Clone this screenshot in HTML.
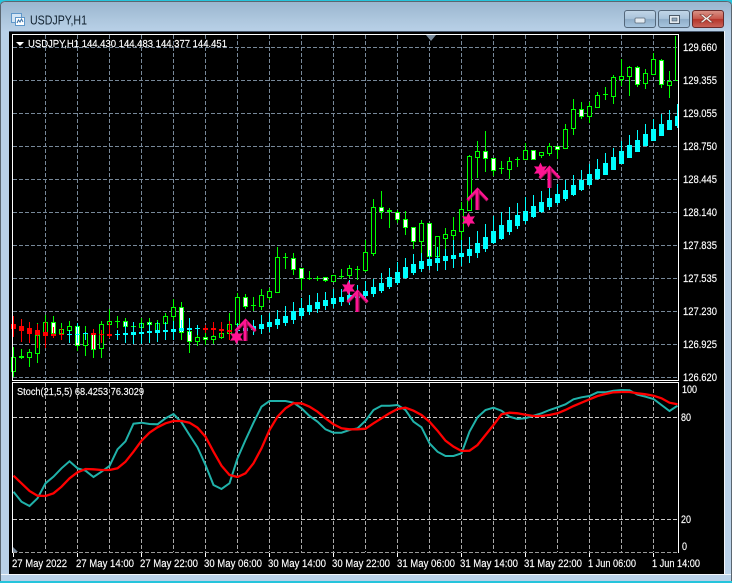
<!DOCTYPE html>
<html><head><meta charset="utf-8"><style>
html,body{margin:0;padding:0;width:732px;height:583px;overflow:hidden;background:#25c4dc}
svg{position:absolute;left:0;top:0;display:block}
text{font-family:"Liberation Sans",sans-serif;fill:#fff;font-size:11px;stroke:#fff;stroke-width:.15px}
</style></head><body>
<svg xmlns="http://www.w3.org/2000/svg" width="732" height="583" viewBox="0 0 732 583">
<defs>
<linearGradient id="tb" x1="0" y1="0" x2="0" y2="1"><stop offset="0" stop-color="#9ab6cf"/><stop offset=".6" stop-color="#aec7de"/><stop offset="1" stop-color="#b9d1e8"/></linearGradient>
<linearGradient id="bt" x1="0" y1="0" x2="0" y2="1"><stop offset="0" stop-color="#c2d6e8"/><stop offset=".48" stop-color="#a9c3da"/><stop offset=".52" stop-color="#8fadc8"/><stop offset="1" stop-color="#a9c6e0"/></linearGradient>
<linearGradient id="cl" x1="0" y1="0" x2="0" y2="1"><stop offset="0" stop-color="#d9958a"/><stop offset=".48" stop-color="#c8584c"/><stop offset=".52" stop-color="#b5352a"/><stop offset="1" stop-color="#c9665c"/></linearGradient>
</defs>
<rect x="0" y="0" width="732" height="583" fill="#25c4dc"/>
<path d="M0 581V6Q0 1 6 1H726Q732 1 732 6V581Z" fill="#b9d1e8"/>
<path d="M.5 581V6Q.5 1.500 6 1.500H726Q731.500 1.500 731.500 6V581" fill="none" stroke="#5a6670"/>
<path d="M1 32V6Q1 2 6 2H726Q731 2 731 6V32Z" fill="url(#tb)"/>
<rect x="1" y="574" width="730" height="1" fill="#f0f6fb"/>
<rect x="9" y="31" width="716" height="544" fill="#f2f6fa"/>
<rect x="9" y="32" width="715" height="542" fill="#000"/>
<rect x="9" y="31" width="715" height="1" fill="#46566a"/>
<!-- title icon -->
<rect x="11.500" y="13.500" width="10" height="9" fill="#d5e6f5" stroke="#5f97c9"/>
<rect x="15.500" y="17.500" width="9" height="8" fill="#fff" stroke="#5f97c9"/>
<path d="M17 23l1.500-3 1.500 2 1.500-3 1.500 3" fill="none" stroke="#3a72a8"/>
<text x="30" y="24.500" textLength="57" lengthAdjust="spacingAndGlyphs" style="font-size:12.500px;fill:#10202e;stroke:none">USDJPY,H1</text>
<!-- buttons -->
<rect x="624.500" y="10.500" width="31" height="17" rx="2.500" fill="url(#bt)" stroke="#54677a"/>
<rect x="635" y="18" width="10" height="5" rx="1" fill="#e4ebf1" stroke="#5a6a7a" stroke-width=".8"/>
<rect x="658.500" y="10.500" width="31" height="17" rx="2.500" fill="url(#bt)" stroke="#54677a"/>
<rect x="669.500" y="15.500" width="10" height="8" fill="#e4ebf1" stroke="#4c5a68"/><rect x="672" y="18" width="5" height="3" fill="#8fa6bb" stroke="#4c5a68" stroke-width=".6"/>
<rect x="692.500" y="10.500" width="31" height="17" rx="2.500" fill="url(#cl)" stroke="#6a2a2a"/>
<path d="M703 14.500l3.500 3 3.500-3h3l-4.500 4 4.500 4h-3l-3.500-3-3.500 3h-3l4.500-4-4.500-4z" fill="#f0ece8" stroke="#7d3a34" stroke-width=".6"/>
<g id="chart" shape-rendering="crispEdges"></g>
<g id="stoch"></g>
<g id="marks"></g>
<!-- frame -->
<g shape-rendering="crispEdges" fill="#fff">
<rect x="12" y="34" width="667" height="1"/>
<rect x="12" y="34" width="1" height="347"/>
<rect x="678" y="34" width="1" height="347"/>
<rect x="12" y="380" width="667" height="1"/>
<rect x="12" y="382" width="667" height="1"/>
<rect x="12" y="382" width="1" height="171"/>
<rect x="678" y="382" width="1" height="171"/>
</g>
<path d="M426 35h10l-5 6z" fill="#778899"/>
<path d="M13 552v-5l5 5z" fill="#778899"/>
<path d="M16 42h8l-4 4z" fill="#fff"/>
<text x="28" y="47" textLength="199" lengthAdjust="spacingAndGlyphs" style="font-size:10.500px">USDJPY,H1  144.430 144.483 144.377 144.451</text>
<text x="17" y="395" textLength="127" lengthAdjust="spacingAndGlyphs" style="font-size:10.500px">Stoch(21,5,5) 68.4253 76.3029</text>
<g id="labels">
<text x="683" y="51" textLength="34" lengthAdjust="spacingAndGlyphs">129.660</text>
<text x="683" y="84" textLength="34" lengthAdjust="spacingAndGlyphs">129.355</text>
<text x="683" y="117" textLength="34" lengthAdjust="spacingAndGlyphs">129.055</text>
<text x="683" y="150" textLength="34" lengthAdjust="spacingAndGlyphs">128.750</text>
<text x="683" y="183" textLength="34" lengthAdjust="spacingAndGlyphs">128.445</text>
<text x="683" y="216" textLength="34" lengthAdjust="spacingAndGlyphs">128.140</text>
<text x="683" y="249" textLength="34" lengthAdjust="spacingAndGlyphs">127.835</text>
<text x="683" y="282" textLength="34" lengthAdjust="spacingAndGlyphs">127.535</text>
<text x="683" y="315" textLength="34" lengthAdjust="spacingAndGlyphs">127.230</text>
<text x="683" y="348" textLength="34" lengthAdjust="spacingAndGlyphs">126.925</text>
<text x="683" y="381" textLength="34" lengthAdjust="spacingAndGlyphs">126.620</text>
<text x="682" y="393" textLength="15" lengthAdjust="spacingAndGlyphs">100</text>
<text x="681" y="421" textLength="10" lengthAdjust="spacingAndGlyphs">80</text>
<text x="681" y="523" textLength="10" lengthAdjust="spacingAndGlyphs">20</text>
<text x="682" y="550" textLength="5" lengthAdjust="spacingAndGlyphs">0</text>
<text x="12" y="567" textLength="55" lengthAdjust="spacingAndGlyphs">27 May 2022</text>
<text x="76" y="567" textLength="58" lengthAdjust="spacingAndGlyphs">27 May 14:00</text>
<text x="140" y="567" textLength="58" lengthAdjust="spacingAndGlyphs">27 May 22:00</text>
<text x="204" y="567" textLength="58" lengthAdjust="spacingAndGlyphs">30 May 06:00</text>
<text x="268" y="567" textLength="58" lengthAdjust="spacingAndGlyphs">30 May 14:00</text>
<text x="332" y="567" textLength="58" lengthAdjust="spacingAndGlyphs">30 May 22:00</text>
<text x="397" y="567" textLength="58" lengthAdjust="spacingAndGlyphs">31 May 06:00</text>
<text x="460" y="567" textLength="58" lengthAdjust="spacingAndGlyphs">31 May 14:00</text>
<text x="524" y="567" textLength="58" lengthAdjust="spacingAndGlyphs">31 May 22:00</text>
<text x="588" y="567" textLength="48" lengthAdjust="spacingAndGlyphs">1 Jun 06:00</text>
<text x="652" y="567" textLength="48" lengthAdjust="spacingAndGlyphs">1 Jun 14:00</text>
</g>
</svg>
<script>
(function(){
var out='';
function R(x,y,w,h,c){if(h<1)h=1;out+='<rect x="'+x+'" y="'+y+'" width="'+w+'" height="'+h+'" fill="'+c+'"/>';}
function L(x,y1,x2,y2,c,d){out+='<line x1="'+x+'" y1="'+y1+'" x2="'+x2+'" y2="'+y2+'" stroke="'+c+'" stroke-dasharray="'+d+'"/>';}
var G='#778899',i;
var hy=[47,80,113,146,179,212,245,278,311,344,377];
for(i=0;i<hy.length;i++)L(13,hy[i]+.5,678,hy[i]+.5,G,'4 2');
for(i=0;i<20;i++){var gx=45+32*i+.5;L(gx,35,gx,380,G,'4 2');}
for(i=0;i<20;i++){var gx2=45+32*i+.5;L(gx2,383,gx2,552,'#a8a8a8','4 2');}
L(13,417.5,678,417.5,'#c8c8c8','4 2');
L(13,519.5,678,519.5,'#c8c8c8','4 2');
L(13,552.5,678,552.5,'#999','4 2');
for(i=0;i<11;i++)R(13+64*i,553,1,4,'#fff');
function Z(y0,a){return a.map(function(v){return [v[0],y0+v[1]/3,y0+v[2]/3,y0+v[3]/3,y0+v[4]/3,v[5]];});}
var gr=Z(280,[
[13,200,290,230,272,'h'],[21,207,237,229,233,'c'],[29,207,260,217,230,'h'],[37,130,250,165,218,'h'],[45,105,205,127,165,'h'],[53,108,170,127,158,'w'],[61,130,175,148,160,'h'],[69,123,165,138,150,'h'],[77,130,212,138,196,'w'],[85,138,228,160,196,'h'],[93,148,234,160,208,'w'],[101,123,234,133,205,'h'],[109,88,160,124,133,'h'],[117,108,145,124,126,'c'],[125,115,150,124,138,'w'],[133,127,160,138,140,'c'],[141,115,170,129,140,'h'],[149,115,145,127,133,'w'],[157,120,155,130,152,'h'],[165,100,140,109,130,'h'],[173,58,125,82,109,'h'],[181,67,180,82,155,'w'],[189,130,218,154,184,'w'],[197,155,197,172,182,'h'],[205,145,195,172,178,'w'],[213,130,192,169,178,'h'],[221,125,178,160,170,'h']]);
gr=gr.concat(Z(180,[
[229,400,480,433,460,'h'],[237,340,440,352,433,'h'],[245,343,388,352,377,'w'],[253,351,393,376,378,'c'],[261,328,390,346,377,'h'],[269,323,360,334,350,'h'],[277,202,335,232,335,'h'],[285,220,267,232,235,'c'],[293,220,285,235,266,'w'],[301,265,330,265,295,'w'],[309,273,300,294,296,'c'],[317,288,303,294,296,'c'],[325,290,305,292,299,'w'],[333,285,303,286,302,'h'],[341,267,298,288,290,'c'],[349,255,295,265,285,'h'],[357,258,300,267,269,'c'],[365,180,275,217,270,'h'],[373,57,228,82,218,'h'],[381,33,118,82,92,'w'],[389,84,143,90,96,'c'],[397,90,130,95,116,'w'],[405,94,165,118,142,'w'],[413,140,207,142,182,'w'],[421,120,230,130,182,'h'],[429,130,240,130,228,'w'],[437,168,235,168,228,'h'],[445,145,220,163,173,'h']]));
gr=gr.concat(Z(40,[
[453,530,620,570,584,'h'],[461,487,600,508,572,'h'],[469,345,510,349,510,'h'],[477,303,415,334,350,'h'],[485,273,395,334,355,'w'],[493,355,408,355,389,'w'],[501,363,402,384,388,'c'],[509,350,418,363,387,'h'],[517,352,380,357,361,'c'],[525,310,360,331,356,'h'],[533,330,358,331,356,'w'],[541,336,353,337,345,'h'],[549,310,347,319,338,'h'],[557,318,357,319,326,'w'],[565,252,326,267,323,'h'],[573,178,285,208,265,'h'],[581,186,236,208,227,'w'],[589,185,248,199,227,'h'],[597,155,205,166,200,'h'],[605,141,180,162,166,'c'],[613,105,192,112,167,'h'],[621,57,137,109,116,'h'],[629,78,167,82,107,'h'],[637,78,140,82,131,'w'],[645,87,147,100,128,'h'],[653,40,105,58,101,'h'],[661,58,143,61,133,'w'],[669,94,173,124,134,'h']]));
var g='#00ff00';
gr.forEach(function(c){var x=c[0],t=Math.round(c[1]),b=Math.round(c[2]),bt=Math.round(c[3]),bb=Math.round(c[4]);
R(x,t,1,b-t,g);
if(c[5]=='c'){R(x-2,bt,5,Math.max(1,bb-bt),g);}
else{var f=c[5]=='w'?'#fff':'#000';R(x-2,bt,5,bb-bt+1,g);R(x-1,bt+1,3,Math.max(bb-bt-1,0),f);}
});
R(675,36,1,45,g);R(675,80,3,1,g);
var C='#00ffff',Rd='#ff0000';
function H(y0,a){a.forEach(function(v){var t=Math.round(y0+v[1]/3),b=Math.round(y0+v[2]/3),bt=Math.round(y0+v[3]/3),bb=Math.round(y0+v[4]/3),col=v[5]?Rd:C;R(v[0],t,1,b-t,col);R(v[0]-2,bt,5,Math.max(bb-bt,1),col);});}
H(280,[[13,108,170,133,147,1],[21,117,185,138,152,1],[29,126,190,145,161,1],[37,133,205,150,165,1],[45,127,205,157,167,1],[53,140,175,161,167,1],[61,145,180,161,165,1],[69,150,190,161,163,0],[77,128,190,163,165,0],[85,155,180,160,163,0],[93,148,208,160,164,1],[101,150,190,161,166,1],[109,125,175,161,167,1],[117,150,180,162,165,0],[125,125,190,159,165,0],[133,127,192,156,164,0],[141,128,192,156,162,0],[149,125,188,153,159,0],[157,125,185,151,159,0],[165,125,180,150,156,0],[173,122,180,147,157,0],[181,120,155,144,154,0],[189,113,165,144,150,0],[197,135,165,143,147,0],[205,135,160,144,150,1],[213,125,165,144,150,1],[221,125,170,147,153,1]]);
H(180,[[229,423,480,449,455,1],[237,430,465,449,452,0],[245,418,462,443,452,0],[253,420,465,438,450,0],[261,405,462,432,447,0],[269,398,456,426,441,0],[277,390,447,417,435,0],[285,378,438,408,429,0],[293,366,433,393,420,0],[301,354,418,384,408,0],[309,345,405,375,396,0],[317,339,399,366,387,0],[325,336,390,360,378,0],[333,327,384,354,372,0],[341,327,377,351,366,0],[349,300,375,345,360,0],[357,315,368,340,355,0],[365,303,366,333,348,0],[373,297,351,321,342,0],[381,279,339,309,333,0],[389,265,327,291,321,0],[397,246,315,276,309,0],[405,234,297,261,294,0],[413,222,285,252,279,0],[421,220,276,243,267,0],[429,210,270,237,258,0],[437,202,273,234,249,0],[445,207,270,228,243,0]]);
H(40,[[453,600,684,645,657,0],[461,600,678,639,651,0],[469,590,670,627,648,0],[477,572,654,609,639,0],[485,552,636,591,627,0],[493,528,612,573,609,0],[501,516,600,555,597,0],[509,501,585,540,576,0],[517,489,567,525,558,0],[525,471,552,513,543,0],[533,465,534,498,531,0],[541,453,519,486,516,0],[549,443,510,474,501,0],[557,432,495,462,489,0],[565,420,483,450,477,0],[573,405,468,435,465,0],[581,390,453,420,450,0],[589,372,438,402,435,0],[597,357,420,387,417,0],[605,339,405,369,405,0],[613,324,390,351,390,0],[621,303,372,333,372,0],[629,285,354,315,354,0],[637,270,336,300,336,0],[645,252,318,282,318,0],[653,237,303,267,303,0],[661,222,288,252,288,0],[669,210,270,240,270,0]]);
R(677,104,1,24,C);R(675,116,3,10,C);
document.getElementById('chart').innerHTML=out;
var t6=[335,365,378,355,310,290,265,244,265,272,291,275,258,208,184,131,128,132,133,115,102,127,165,202,255,315,327,310,235,180,128,80,63,63,63,68,85,108,125,148,158,158,150,145];
var r6=[287,310,333,347,348,340,320,295,277,267,268,270,270,265,245,215,182,158,142,130,123,123,128,143,170,215,257,285,291,280,250,205,150,110,85,70,70,80,95,115,133,145,148,148];
var t7=[122,90,77,77,75,90,125,142,190,215,228,228,220,155,112,90,83,92,110,117,115,107,100,90,82,73,58,52,48,37,37,32,30,31,44,50,57,75,93,77];
var r7=[146,130,115,100,87,83,92,105,125,152,182,200,213,212,195,165,135,103,98,100,104,108,108,105,100,90,78,68,58,48,42,37,36,36,40,43,47,55,68,73];
function pts(a,b){var s=[];a.concat(b).forEach(function(v,k){s.push((13.5+8*k)+','+(380+v/3).toFixed(1));});return s.join(' ');}
document.getElementById('stoch').innerHTML=
'<polyline points="'+pts(t6,t7)+'" fill="none" stroke="#20b2aa" stroke-width="2"/>'+
'<polyline points="'+pts(r6,r7)+'" fill="none" stroke="#ff0000" stroke-width="2.300"/>';
var m='';
[[245,319],[357,290],[477,188],[549,166]].forEach(function(a){var x=a[0]+.5,y=a[1];
m+='<path d="M'+(x-10)+' '+(y+12.5)+'L'+x+' '+(y+2)+'L'+(x+10)+' '+(y+12.5)+'" fill="none" stroke="#b3105f" stroke-width="3"/>';
m+='<path d="M'+(x-10)+' '+(y+11.5)+'L'+x+' '+(y+1)+'L'+(x+10)+' '+(y+11.5)+'" fill="none" stroke="#ff1493" stroke-width="2.200"/>';
m+='<rect x="'+(x-2)+'" y="'+(y+2)+'" width="4" height="20" fill="#b3105f"/><rect x="'+(x-2)+'" y="'+(y+2)+'" width="2.500" height="20" fill="#ff1493"/>';
});
[[236,337],[348,288],[468,220],[540,170]].forEach(function(a){var x=a[0]+.5,y=a[1],s='',k;
for(k=0;k<12;k++){var rr=k%2?3.900:7.500,an=k*Math.PI/6-Math.PI/2;s+=(x+rr*Math.cos(an)).toFixed(1)+','+(y+rr*Math.sin(an)).toFixed(1)+' ';}
m+='<polygon points="'+s+'" fill="#ff1493"/>';
});
document.getElementById('marks').innerHTML=m;
})();
</script>
</body></html>
